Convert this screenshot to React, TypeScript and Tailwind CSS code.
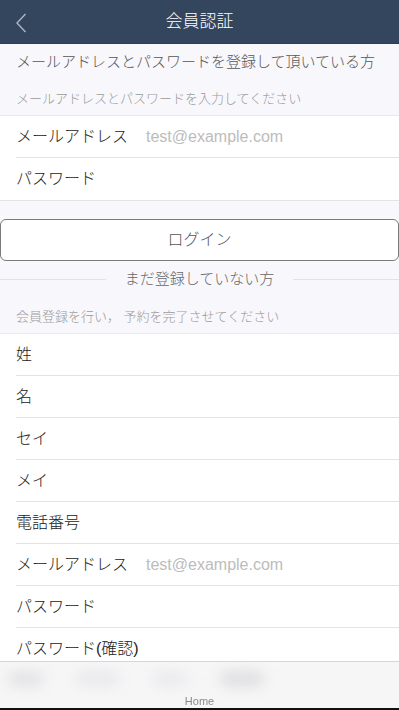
const jp = "font-['Liberation_Sans','Noto_Sans_CJK_JP',sans-serif]";

const Row = ({
  label,
  placeholder,
  last,
}: {
  label: string;
  placeholder?: string;
  last?: boolean;
}) => (
  <div className={last ? "border-b border-[#e3e3e6]" : ""}>
    <div
      className={`h-[42px] ml-4 flex items-center ${
        last ? "" : "border-b border-[#e3e3e6]"
      }`}
    >
      <span className="text-[16px] text-[#222] font-light w-[130px] shrink-0">{label}</span>
      {placeholder && (
        <span className="text-[16px] text-[#bcbcbc]">{placeholder}</span>
      )}
    </div>
  </div>
);

export default function App() {
  return (
    <div className={`${jp} min-h-[710px] bg-[#f8f7fb] pb-[49px]`}>
      <header className="h-[44px] bg-[#34465e] flex items-center justify-center relative border-b border-[#2c3c52]">
        <svg
          className="absolute left-[15px] top-[13px]"
          width="12"
          height="20"
          viewBox="0 0 12 20"
          fill="none"
        >
          <path d="M10.5 1 L2 10 L10.5 19" stroke="#aab6c6" strokeWidth="1.4" />
        </svg>
        <h1 className="text-white text-[17px] font-light">会員認証</h1>
      </header>

      <div className="h-[36px] flex items-center px-4 text-[15px] text-[#555] font-light">
        メールアドレスとパスワードを登録して頂いている方
      </div>
      <div className="h-[35px] flex items-center px-4 pt-[2px] text-[13px] text-[#9a9a9a] font-light">
        メールアドレスとパスワードを入力してください
      </div>

      <div className="bg-white border-t border-[#e9e9ec]">
        <Row label="メールアドレス" placeholder="test@example.com" />
        <Row label="パスワード" last />
      </div>

      <button className="mt-[18px] w-full h-[42px] bg-white border border-[#7a7a7a] rounded-[6px] text-[16px] text-[#555] font-light">
        ログイン
      </button>

      <div className="h-[36px] flex items-center">
        <div className="h-px bg-[#e2e2e5] flex-1" />
        <span className="px-[19px] text-[15px] text-[#666] font-light">まだ登録していない方</span>
        <div className="h-px bg-[#e2e2e5] flex-1" />
      </div>
      <div className="h-[36px] flex items-center px-4 pt-[4px] text-[13px] text-[#9a9a9a] font-light">
        会員登録を行い，&nbsp;予約を完了させてください
      </div>

      <div className="bg-white border-t border-[#e9e9ec]">
        <Row label="姓" />
        <Row label="名" />
        <Row label="セイ" />
        <Row label="メイ" />
        <Row label="電話番号" />
        <Row label="メールアドレス" placeholder="test@example.com" />
        <Row label="パスワード" />
        <Row label="パスワード(確認)" last />
      </div>

      <nav className="fixed bottom-0 left-0 right-0 h-[49px] bg-[#f6f6f7]/95 border-t border-[#d6d6d9] overflow-hidden">
        <div className="flex items-center gap-8 px-2 pt-[10px] blur-[7px]">
          <div className="h-[12px] w-[36px] rounded-full bg-[#dedee0]" />
          <div className="h-[12px] w-[44px] rounded-full bg-[#e6e6e8]" />
          <div className="h-[12px] w-[36px] rounded-full bg-[#e8e8ea]" />
          <div className="h-[14px] w-[44px] rounded-full bg-[#dcdcde]" />
        </div>
        <div className="absolute bottom-[3px] left-0 right-0 text-center text-[11px] text-[#8a8a8a] leading-none font-['Liberation_Sans',sans-serif]">
          Home
        </div>
        <div className="absolute bottom-0 left-0 right-0 h-[2px] bg-[#111]" />
      </nav>
    </div>
  );
}
